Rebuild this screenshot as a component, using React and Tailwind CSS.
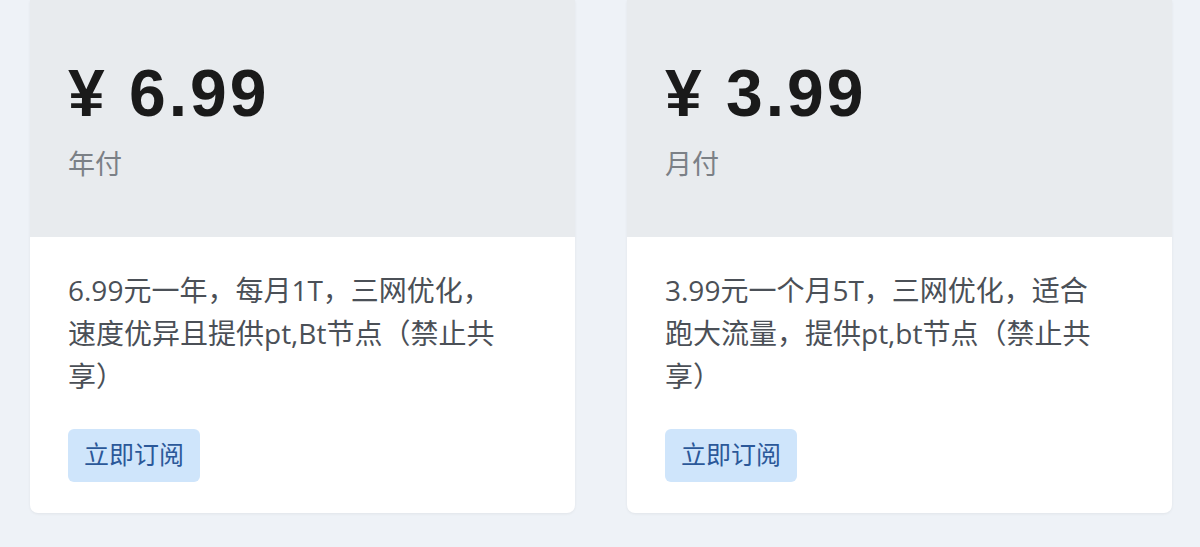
import React from 'react';

const plans = [
    {
        price: '¥ 6.99',
        period: '年付',
        desc: '6.99元一年，每月1T，三网优化，速度优异且提供pt,Bt节点（禁止共享）',
    },
    {
        price: '¥ 3.99',
        period: '月付',
        desc: '3.99元一个月5T，三网优化，适合跑大流量，提供pt,bt节点（禁止共享）',
    },
];

const App = () => {
    return (
        <div
            className="w-[1200px] h-[547px] overflow-hidden bg-[#eef2f7] flex gap-[52px] px-[30px]"
            style={{ fontFamily: '"Liberation Sans", "Noto Sans CJK SC", sans-serif' }}
        >
            {plans.map(plan => (
                <div
                    key={plan.price}
                    className="w-[545px] h-[513px] shrink-0 flex flex-col bg-white rounded-b-lg overflow-hidden shadow-[0_1px_3px_rgba(0,0,0,0.06)]"
                >
                    {/* Price header */}
                    <div className="h-[237px] shrink-0 bg-[#e8ebee] pl-[38px] pt-[60px]">
                        <div className="text-[66px] leading-none font-bold text-[#1a1a1a] tracking-[3px]">
                            {plan.price}
                        </div>
                        <div className="mt-[21px] text-[27px] leading-[36px] text-[#7b8086]">
                            {plan.period}
                        </div>
                    </div>

                    {/* Description */}
                    <div className="flex-1 pl-[38px] pt-[32px]">
                        <p
                            className="w-[444px] text-[28px] leading-[43px] text-[#4b5057]"
                            style={{ fontFamily: '"Open Sans", "Noto Sans CJK SC", sans-serif' }}
                        >
                            {plan.desc}
                        </p>
                        <button className="mt-[31px] h-[53px] px-[16px] rounded-md bg-[#cfe5fb] text-[25px] text-[#2b5899]">
                            立即订阅
                        </button>
                    </div>
                </div>
            ))}
        </div>
    );
};

export default App;
